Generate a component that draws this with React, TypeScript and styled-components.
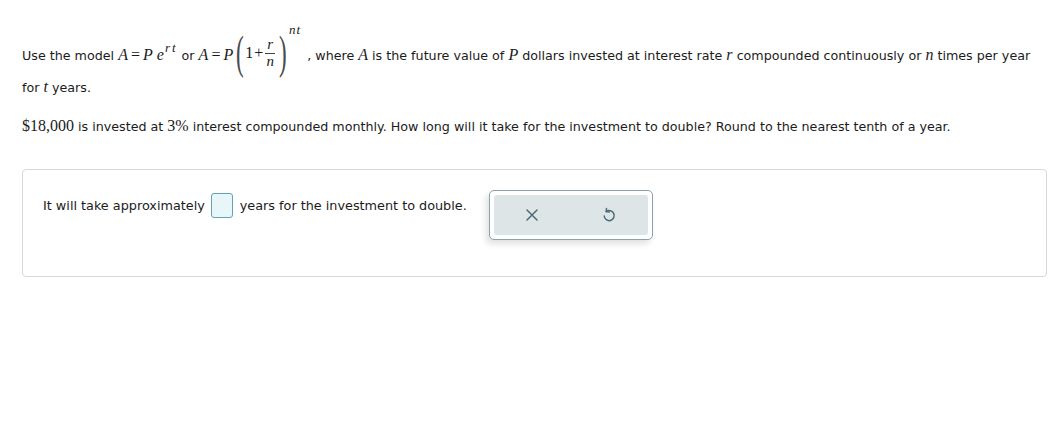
import React from "react";
import styled, { createGlobalStyle } from "styled-components";

const Global = createGlobalStyle`
  html, body { margin: 0; padding: 0; background: #fff; }
  body { font-family: "DejaVu Sans", Verdana, sans-serif; font-size: 12.7px; color: #1b1b1b; }
`;

const Page = styled.div`
  padding: 20px 10px 0 22px;
`;

const Para = styled.p<{ $top?: number }>`
  margin: ${(p) => p.$top ?? 0}px 0 0 0;
  line-height: 20px;
`;

const FirstLine = styled.div`
  display: flex;
  align-items: flex-end;
  height: 46px;
  white-space: nowrap;
`;

const Chunk = styled.span<{ $gap?: number }>`
  line-height: 20px;
  margin-left: ${(p) => p.$gap ?? 0}px;
`;

const M = styled.span`
  font-family: "Liberation Serif", "Times New Roman", serif;
  font-style: italic;
  font-size: 16px;
`;

const MR = styled.span`
  font-family: "Liberation Serif", "Times New Roman", serif;
  font-size: 16px;
`;

const Op = styled.span<{ $tight?: boolean }>`
  font-family: "Liberation Serif", "Times New Roman", serif;
  font-size: 16px;
  margin: 0 ${(p) => (p.$tight ? 1 : 3)}px;
`;

const Sup = styled.sup`
  font-family: "Liberation Serif", "Times New Roman", serif;
  font-style: italic;
  font-size: 13px;
  vertical-align: 8px;
  line-height: 0;
  letter-spacing: 2px;
  margin-left: 1px;
`;

const Group = styled.span`
  display: inline-flex;
  align-items: center;
  margin-bottom: -8px;
  height: 42px;
`;

const Paren = styled.span`
  display: inline-block;
  font-family: "Liberation Serif", "Times New Roman", serif;
  font-size: 46px;
  line-height: 42px;
  color: #4a4a4a;
  transform: scaleX(0.5);
  width: 12px;
  text-align: center;
`;

const Frac = styled.span`
  display: inline-flex;
  flex-direction: column;
  align-items: center;
  margin: 0 1px;
`;

const Num = styled.span`
  font-family: "Liberation Serif", "Times New Roman", serif;
  font-style: italic;
  font-size: 15px;
  line-height: 15px;
  padding: 0 2px 1px;
  border-bottom: 1px solid #444;
`;

const Den = styled.span`
  font-family: "Liberation Serif", "Times New Roman", serif;
  font-style: italic;
  font-size: 15px;
  line-height: 15px;
`;

const OuterSup = styled.span`
  align-self: flex-start;
  font-family: "Liberation Serif", "Times New Roman", serif;
  font-style: italic;
  font-size: 13px;
  letter-spacing: 1px;
  margin-top: -10px;
  margin-left: 1px;
`;

const Card = styled.div`
  margin-top: 32px;
  border: 1px solid #d4dadb;
  border-radius: 4px;
  height: 108px;
  box-sizing: border-box;
  padding: 20px 20px;
  display: flex;
  align-items: flex-start;
`;

const Answer = styled.div`
  display: flex;
  align-items: center;
  height: 28px;
  margin-top: 1px;
  font-size: 12.8px;
`;

const Blank = styled.span`
  display: inline-block;
  width: 20px;
  height: 23px;
  margin: 0 7px 0 6px;
  border: 1px solid #5fa3b7;
  border-radius: 3px;
  background: #e8f5f9;
`;

const Tools = styled.div`
  margin-left: 22px;
  border: 1px solid #8aa2aa;
  border-radius: 5px;
  padding: 4px;
  width: 164px;
  height: 50px;
  box-sizing: border-box;
  background: #fff;
  box-shadow: -3px 4px 6px rgba(0, 0, 0, 0.12);
`;

const ToolInner = styled.div`
  display: flex;
  height: 100%;
  background: #dee5e7;
  border-radius: 3px;
`;

const ToolBtn = styled.button`
  flex: 1;
  border: 0;
  background: transparent;
  display: flex;
  align-items: center;
  justify-content: center;
  padding: 0;
  color: #4d6b76;
`;

export default function App() {
  return (
    <>
      <Global />
      <Page>
        <FirstLine>
          <Chunk>Use the model&nbsp;</Chunk>
          <Chunk>
            <M>A</M>
            <Op>=</Op>
            <M>P</M> <M>e</M>
            <Sup>rt</Sup>
          </Chunk>
          <Chunk>&nbsp;or&nbsp;</Chunk>
          <Chunk>
            <M>A</M>
            <Op>=</Op>
            <M>P</M>
          </Chunk>
          <Group>
            <Paren>(</Paren>
            <MR>1</MR>
            <Op $tight>+</Op>
            <Frac>
              <Num>r</Num>
              <Den>n</Den>
            </Frac>
            <Paren>)</Paren>
            <OuterSup>nt</OuterSup>
          </Group>
          <Chunk $gap={6}>
            , where <M>A</M> is the future value of <M>P</M> dollars invested at interest rate <M>r</M>{" "}
            compounded continuously or <M>n</M> times per year
          </Chunk>
        </FirstLine>
        <Para $top={11}>
          for <M>t</M> years.
        </Para>
        <Para $top={18}>
          <MR>$18,000</MR> is invested at <MR>3%</MR> interest compounded monthly. How long will it take for the
          investment to double? Round to the nearest tenth of a year.
        </Para>
        <Card>
          <Answer>
            It will take approximately
            <Blank />
            years for the investment to double.
          </Answer>
          <Tools>
            <ToolInner>
              <ToolBtn aria-label="clear">
                <svg width="14" height="14" viewBox="0 0 14 14" fill="none" stroke="currentColor" strokeWidth="1.5" strokeLinecap="round">
                  <path d="M2 2L12 12M12 2L2 12" />
                </svg>
              </ToolBtn>
              <ToolBtn aria-label="undo">
                <svg width="14" height="16" viewBox="0 0 14 16" fill="none" stroke="currentColor" strokeWidth="1.5" strokeLinecap="round" strokeLinejoin="round">
                  <path d="M4.2 4.6A5 5 0 1 1 2.2 9" />
                  <path d="M4.5 1.5L4.2 4.6L7.3 5" />
                </svg>
              </ToolBtn>
            </ToolInner>
          </Tools>
        </Card>
      </Page>
    </>
  );
}
